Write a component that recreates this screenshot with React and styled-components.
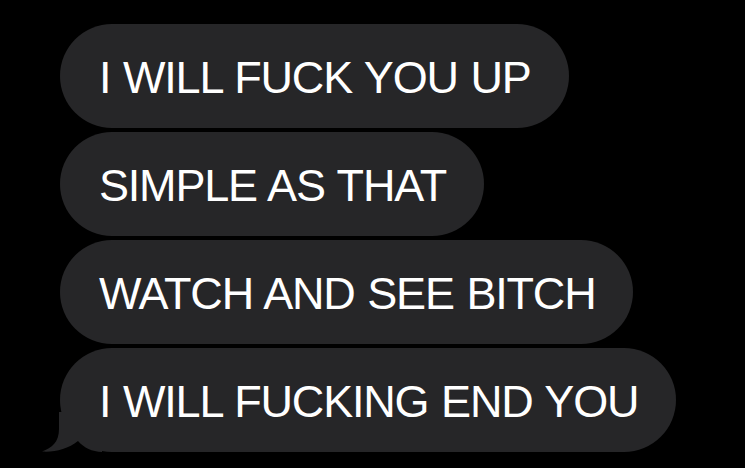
import styled, { createGlobalStyle } from "styled-components";

const Global = createGlobalStyle`
  html, body {
    margin: 0;
    background: #000;
  }
  body {
    width: 745px;
    height: 468px;
    overflow: hidden;
  }
`;

const Thread = styled.div`
  display: flex;
  flex-direction: column;
  align-items: flex-start;
  gap: 4px;
  padding: 24px 0 0 60px;
`;

const Bubble = styled.div`
  position: relative;
  height: 104px;
  display: flex;
  align-items: center;
  padding: 0 38px 0 39px;
  border-radius: 52px;
  background: #262628;
  color: #fff;
  font-family: "Liberation Sans", Arial, sans-serif;
  font-size: 45px;
  letter-spacing: -1.2px;
  word-spacing: 1.4px;
  white-space: nowrap;
`;

const Text = styled.span`
  position: relative;
  z-index: 1;
  line-height: 1;
  padding-top: 2px;
`;

// bubble tail, bottom left of the last message
const Tail = styled.svg`
  position: absolute;
  left: -18px;
  bottom: 0;
  width: 60px;
  height: 40px;
`;

const messages = [
  "I WILL FUCK YOU UP",
  "SIMPLE AS THAT",
  "WATCH AND SEE BITCH",
  "I WILL FUCKING END YOU",
];

export default function App() {
  return (
    <>
      <Global />
      <Thread>
        {messages.map((m, i) => (
          <Bubble key={i}>
            {i === messages.length - 1 && (
              <Tail viewBox="0 0 60 40">
                <path
                  d="M17,0 L17,17 C17,30 10,36 0,39.5 C12,40.5 26,37 36,29 C42,36 50,39.5 60,40 L60,0 Z"
                  fill="#262628"
                />
              </Tail>
            )}
            <Text>{m}</Text>
          </Bubble>
        ))}
      </Thread>
    </>
  );
}
